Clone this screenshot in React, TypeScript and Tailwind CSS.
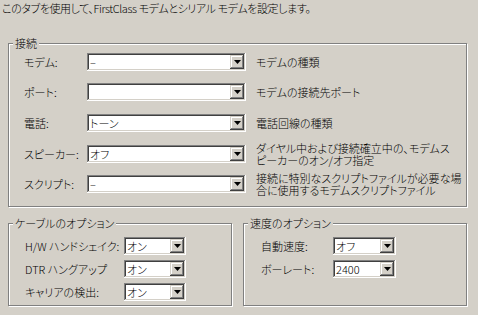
import type { ReactNode } from "react";

const sunken =
  "shadow-[inset_-1px_-1px_#ffffff,inset_1px_1px_#808080,inset_-2px_-2px_#d4d0c8,inset_2px_2px_#404040]";
const raised =
  "shadow-[inset_-1px_-1px_#404040,inset_1px_1px_#d4d0c8,inset_-2px_-2px_#808080,inset_2px_2px_#ffffff]";

function Combo({ value, width }: { value: string; width: string }) {
  return (
    <div className={`flex h-[18px] shrink-0 bg-white ${sunken} ${width}`}>
      <span className="flex-1 overflow-hidden whitespace-nowrap pl-[3px] leading-[18px]">{value}</span>
      <div className={`my-[2px] mr-[2px] flex w-[14px] items-center justify-center bg-[#d4d0c8] ${raised}`}>
        <svg width="7" height="4" viewBox="0 0 7 4">
          <polygon points="0,0 7,0 3.5,4" fill="#000" />
        </svg>
      </div>
    </div>
  );
}

function Group({ title, className, children }: { title: string; className: string; children: ReactNode }) {
  return (
    <div className={`relative border border-[#808080] shadow-[inset_1px_1px_#ffffff,1px_1px_#ffffff] ${className}`}>
      <span className="absolute -top-[7px] left-[4px] bg-[#d4d0c8] px-[2px] leading-[13px]">{title}</span>
      {children}
    </div>
  );
}

const mainRows = [
  { label: "モデム:", value: "–", desc: ["モデムの種類"], mt: "mt-[9px]" },
  { label: "ポート:", value: "", desc: ["モデムの接続先ポート"], mt: "mt-[12px]" },
  { label: "電話:", value: "トーン", desc: ["電話回線の種類"], mt: "mt-[13px]" },
  {
    label: "スピーカー:",
    value: "オフ",
    desc: ["ダイヤル中および接続確立中の、モデムス", "ピーカーのオン/オフ指定"],
    mt: "mt-[13px]",
  },
  {
    label: "スクリプト:",
    value: "–",
    desc: ["接続に特別なスクリプトファイルが必要な場", "合に使用するモデムスクリプトファイル"],
    mt: "mt-[12px]",
  },
];

const cableRows = [
  { label: "H/W ハンドシェイク:", value: "オン" },
  { label: "DTR ハングアップ", value: "オン" },
  { label: "キャリアの検出:", value: "オン" },
];

const speedRows = [
  { label: "自動速度:", value: "オフ" },
  { label: "ボーレート:", value: "2400" },
];

export default function App() {
  return (
    <div className="h-[315px] w-[478px] overflow-hidden bg-[#d4d0c8] font-['Noto_Sans_CJK_JP',sans-serif] text-[11px] font-light leading-[13px] text-black [font-feature-settings:'palt']">
      <p className="pl-[2px] pt-[2px] tracking-[-0.4px]">
        このタブを使用して、FirstClass モデムとシリアル モデムを設定します。
      </p>

      <Group title="接続" className="ml-[8px] mt-[28px] h-[164px] w-[459px]">
        {mainRows.map((r) => (
          <div key={r.label} className={`flex h-[18px] items-center pl-[15px] ${r.mt}`}>
            <span className="w-[63px] shrink-0 whitespace-nowrap">{r.label}</span>
            <Combo value={r.value} width="w-[159px]" />
            <div className="ml-[10px] whitespace-nowrap leading-[12px]">
              {r.desc.map((d) => (
                <div key={d}>{d}</div>
              ))}
            </div>
          </div>
        ))}
      </Group>

      <div className="ml-[8px] mt-[16px] flex gap-[11px]">
        <Group title="ケーブルのオプション" className="h-[83px] w-[224px]">
          <div className="mt-[13px] flex flex-col gap-[5px] pl-[16px]">
            {cableRows.map((r) => (
              <div key={r.label} className="flex h-[18px] items-center">
                <span className="w-[99px] shrink-0 whitespace-nowrap">{r.label}</span>
                <Combo value={r.value} width="w-[62px]" />
              </div>
            ))}
          </div>
        </Group>
        <Group title="速度のオプション" className="h-[83px] w-[224px]">
          <div className="mt-[13px] flex flex-col gap-[5px] pl-[17px]">
            {speedRows.map((r) => (
              <div key={r.label} className="flex h-[18px] items-center">
                <span className="w-[72px] shrink-0 whitespace-nowrap">{r.label}</span>
                <Combo value={r.value} width="w-[63px]" />
              </div>
            ))}
          </div>
        </Group>
      </div>
    </div>
  );
}
